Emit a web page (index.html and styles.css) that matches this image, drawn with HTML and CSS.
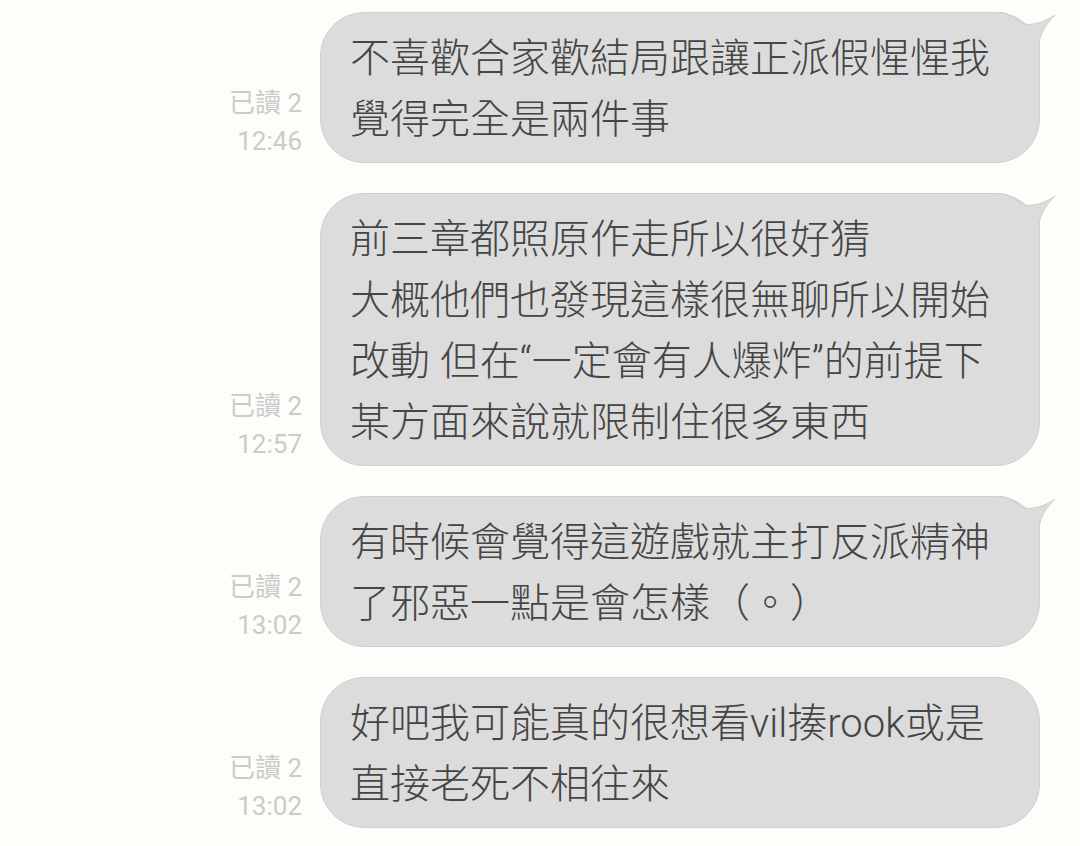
FILE: index.html
```html
<!DOCTYPE html>
<html lang="zh-Hant">
<head>
  <meta charset="UTF-8" />
  <meta name="viewport" content="width=device-width, initial-scale=1.0"/>
  <title>聊天紀錄</title>
  <link rel="stylesheet" href="styles.css">
</head>
<body>
  <div class="chat">
    <div class="row">
      <div class="meta">已讀 2<br>12:46</div>
      <div class="bubble">
        <svg class="tail" width="60" height="50" viewBox="0 0 60 50">
          <path class="tail-fill" d="M0 0 C12 0 20 12 28 12 C38 12 48 8 55 3 C48 10 42 18 40 28 L39.5 50 L0 50 Z"/>
          <path class="tail-line" d="M0 0.5 C12 0.5 20 12.5 28 12.5 C38 12.5 48 8 55 3 C48 10 42 18 39.5 28 L39.5 50"/>
        </svg>
        不喜歡合家歡結局跟讓正派假惺惺我<br>覺得完全是兩件事
      </div>
    </div>

    <div class="row">
      <div class="meta">已讀 2<br>12:57</div>
      <div class="bubble">
        <svg class="tail" width="60" height="50" viewBox="0 0 60 50">
          <path class="tail-fill" d="M0 0 C12 0 20 12 28 12 C38 12 48 8 55 3 C48 10 42 18 40 28 L39.5 50 L0 50 Z"/>
          <path class="tail-line" d="M0 0.5 C12 0.5 20 12.5 28 12.5 C38 12.5 48 8 55 3 C48 10 42 18 39.5 28 L39.5 50"/>
        </svg>
        前三章都照原作走所以很好猜<br>大概他們也發現這樣很無聊所以開始<br>改動 但在“一定會有人爆炸”的前提下<br>某方面來說就限制住很多東西
      </div>
    </div>

    <div class="row">
      <div class="meta">已讀 2<br>13:02</div>
      <div class="bubble">
        <svg class="tail" width="60" height="50" viewBox="0 0 60 50">
          <path class="tail-fill" d="M0 0 C12 0 20 12 28 12 C38 12 48 8 55 3 C48 10 42 18 40 28 L39.5 50 L0 50 Z"/>
          <path class="tail-line" d="M0 0.5 C12 0.5 20 12.5 28 12.5 C38 12.5 48 8 55 3 C48 10 42 18 39.5 28 L39.5 50"/>
        </svg>
        有時候會覺得這遊戲就主打反派精神<br>了邪惡一點是會怎樣（。）
      </div>
    </div>

    <div class="row">
      <div class="meta">已讀 2<br>13:02</div>
      <div class="bubble">
        好吧我可能真的很想看vil揍rook或是<br>直接老死不相往來
      </div>
    </div>
  </div>
</body>
</html>
```

FILE: styles.css
```css
body {
  margin: 0;
  background: #fdfdf9;
  font-family: Roboto, "Noto Sans CJK TC", sans-serif;
}
.chat {
  display: flex;
  flex-direction: column;
  gap: 30px;
  padding: 12px 40px 18px 0;
}
.row {
  display: flex;
  justify-content: flex-end;
  align-items: flex-end;
  gap: 18px;
}
.meta {
  font-size: 26px;
  line-height: 38px;
  color: #cbcbcb;
  text-align: right;
  margin-bottom: 3px;
}
.bubble {
  position: relative;
  box-sizing: border-box;
  width: 720px;
  padding: 15px 30px 12px 29px;
  background: #dcdcdc;
  border: 1px solid #cfcfcf;
  border-radius: 44px;
  color: #454545;
  font-size: 40px;
  font-weight: 300;
  line-height: 61px;
  white-space: nowrap;
}
.tail {
  position: absolute;
  top: -1px;
  right: -21px;
}
.tail-fill {
  fill: #dcdcdc;
}
.tail-line {
  fill: none;
  stroke: #cfcfcf;
  stroke-width: 1;
}
```
